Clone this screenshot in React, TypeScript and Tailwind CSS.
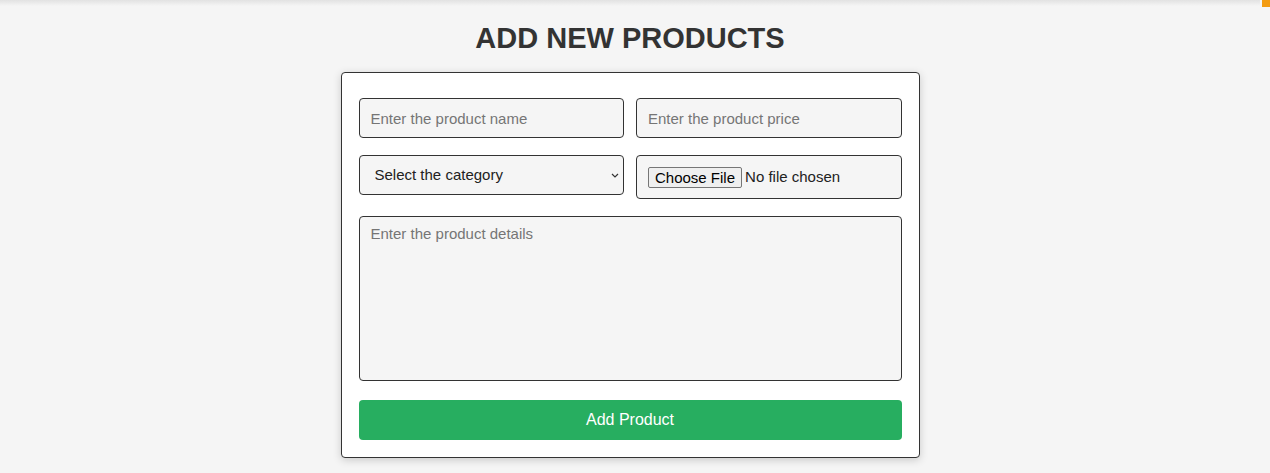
import React from "react";

// Add-product form page
export default function App() {
  return (
    <div
      className="relative min-h-[473px] bg-[#f5f5f5] pr-[10px] text-[#333]"
      style={{ fontFamily: '"Liberation Sans", Arial, sans-serif' }}
    >
      {/* top edge shadow from the header above */}
      <div className="h-[6px] bg-gradient-to-b from-[#e2e2e2] to-[#f5f5f5]" />
      <div className="absolute right-0 top-0 h-[7px] w-[8px] bg-[#f39c12]" />

      <h1 className="mt-[15px] text-center text-[29px] font-bold leading-[34px] text-[#333]">
        ADD NEW PRODUCTS
      </h1>

      <form
        onSubmit={(e) => e.preventDefault()}
        className="mx-auto mt-[17px] w-[579px] rounded-[4px] border border-[#333] bg-white px-[17px] pb-[17px] pt-[25px] shadow-[0_2px_8px_rgba(0,0,0,0.18)]"
      >
        <div className="grid grid-cols-2 gap-x-[12px] gap-y-[17px]">
          <input
            type="text"
            placeholder="Enter the product name"
            className="h-[40px] rounded-[4px] border border-[#333] bg-[#f5f5f5] px-[11px] text-[15px] placeholder:text-[#757575] outline-none"
          />
          <input
            type="text"
            placeholder="Enter the product price"
            className="h-[40px] rounded-[4px] border border-[#333] bg-[#f5f5f5] px-[11px] text-[15px] placeholder:text-[#757575] outline-none"
          />
          <div className="relative self-start">
            <select
              defaultValue=""
              className="h-[40px] w-full appearance-none rounded-[4px] border border-[#333] bg-[#f5f5f5] pl-[15px] pr-[24px] text-[15px] text-[#222] outline-none"
            >
              <option value="" disabled>
                Select the category
              </option>
              <option>Electronics</option>
              <option>Clothing</option>
            </select>
            <svg
              viewBox="0 0 8 5"
              className="pointer-events-none absolute right-[5px] top-[18px] h-[5px] w-[8px]"
            >
              <path d="M1 1l3 3 3-3" fill="none" stroke="#333" strokeWidth="1.2" />
            </svg>
          </div>
          <div className="flex h-[44px] items-center rounded-[4px] border border-[#333] bg-[#f5f5f5] px-[11px] text-[15px]">
            <span className="rounded-[2px] border border-[#767676] bg-[#efefef] px-[6px] text-[15px] leading-[19px] text-black">
              Choose File
            </span>
            <span className="ml-[3px] text-[#222]">No file chosen</span>
          </div>
        </div>

        <textarea
          placeholder="Enter the product details"
          className="mt-[17px] block h-[165px] w-full resize-none rounded-[4px] border border-[#333] bg-[#f5f5f5] px-[11px] py-[8px] text-[15px] leading-[18px] placeholder:text-[#757575] outline-none"
        />

        <button
          type="submit"
          className="mt-[19px] block h-[40px] w-full rounded-[4px] bg-[#27ae60] text-[16px] text-white"
        >
          Add Product
        </button>
      </form>
    </div>
  );
}
